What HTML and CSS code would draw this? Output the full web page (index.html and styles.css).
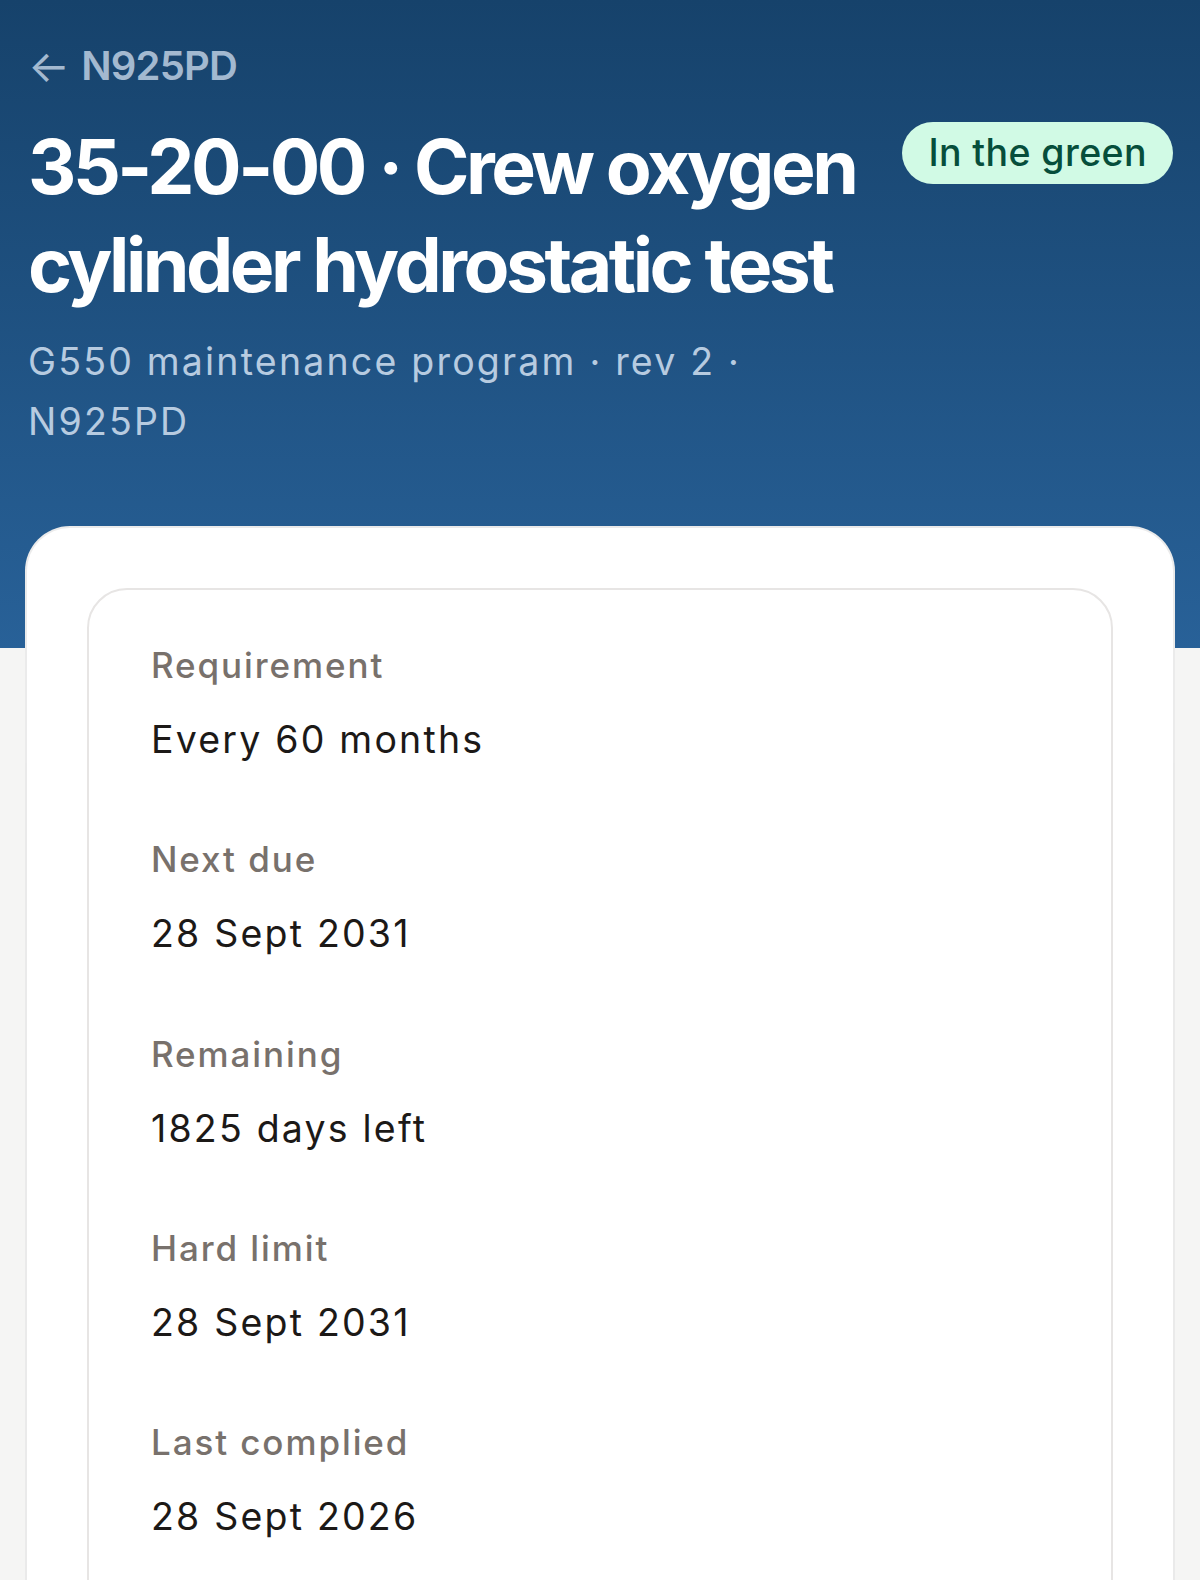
FILE: index.html
```html
<!DOCTYPE html>
<html lang="en">

<head>
    <meta charset="UTF-8">
    <meta name="viewport" content="width=device-width, initial-scale=1.0">
    <title>35-20-00 · Crew oxygen cylinder hydrostatic test</title>
    <link rel="stylesheet" href="styles.css">
</head>

<body>
    <!-- 顶部蓝色区域 -->
    <header class="hero">
        <a href="javascript:;" class="back"><span class="back-arrow">←</span>N925PD</a>
        <div class="hero-row">
            <div class="hero-text">
                <h1 class="title">35-20-00 · Crew oxygen cylinder hydrostatic test</h1>
                <p class="subtitle">G550 maintenance program · rev 2 · N925PD</p>
            </div>
            <span class="badge">In the green</span>
        </div>
    </header>

    <main class="sheet">
        <dl class="facts">
            <div class="fact">
                <dt>Requirement</dt>
                <dd>Every 60 months</dd>
            </div>
            <div class="fact">
                <dt>Next due</dt>
                <dd>28 Sept 2031</dd>
            </div>
            <div class="fact">
                <dt>Remaining</dt>
                <dd>1825 days left</dd>
            </div>
            <div class="fact">
                <dt>Hard limit</dt>
                <dd>28 Sept 2031</dd>
            </div>
            <div class="fact">
                <dt>Last complied</dt>
                <dd>28 Sept 2026</dd>
            </div>
        </dl>
    </main>
</body>

</html>
```

FILE: styles.css
```css
*{
    margin: 0;
    padding: 0;
    box-sizing: border-box;
}
body{
    min-height: 1700px;
    background: #f5f5f4;
    font-family: Inter, "Noto Sans", "Liberation Sans", sans-serif;
    color: #1c1917;
}
.hero{
    padding: 42px 27px 196px 28px;
    background: linear-gradient(180deg, #16426b 0%, #286198 100%);
}
.back{
    display: inline-flex;
    align-items: center;
    gap: 12px;
    color: #a3b9d0;
    font-size: 40px;
    font-weight: 600;
    line-height: 48px;
    letter-spacing: -0.8px;
    text-decoration: none;
}
.back-arrow{
    font-weight: 400;
    font-size: 44px;
}
.hero-row{
    display: flex;
    align-items: flex-start;
    justify-content: space-between;
    gap: 20px;
    margin-top: 28px;
}
.hero-text{
    flex: 1;
}
.title{
    color: #fff;
    font-size: 75px;
    font-weight: 700;
    line-height: 97.5px;
    letter-spacing: -3.5px;
}
.badge{
    flex-shrink: 0;
    margin-top: 4px;
    padding: 10px 26px;
    border-radius: 31px;
    background: #d1fae5;
    color: #064e3b;
    font-size: 37.5px;
    font-weight: 500;
    line-height: 42px;
    letter-spacing: 0.4px;
    white-space: nowrap;
}
.subtitle{
    max-width: 840px;
    margin-top: 19px;
    color: #b7cbe0;
    font-size: 37.5px;
    line-height: 60px;
    letter-spacing: 2.2px;
}
.sheet{
    margin: -122px 25px 0;
    padding: 60px 60px 80px;
    border: 2.5px solid rgba(0, 0, 0, 0.08);
    border-bottom: none;
    border-radius: 45px 45px 0 0;
    background: #fff;
}
.facts{
    padding: 49px 62px 120px;
    border: 2.5px solid #e7e5e4;
    border-radius: 40px;
}
.fact + .fact{
    margin-top: 65px;
}
.fact dt{
    color: #78716c;
    font-size: 35px;
    font-weight: 500;
    line-height: 52.5px;
    letter-spacing: 1.9px;
}
.fact dd{
    margin-top: 20.5px;
    color: #1c1917;
    font-size: 37.5px;
    line-height: 56.25px;
    letter-spacing: 2.2px;
}
```
